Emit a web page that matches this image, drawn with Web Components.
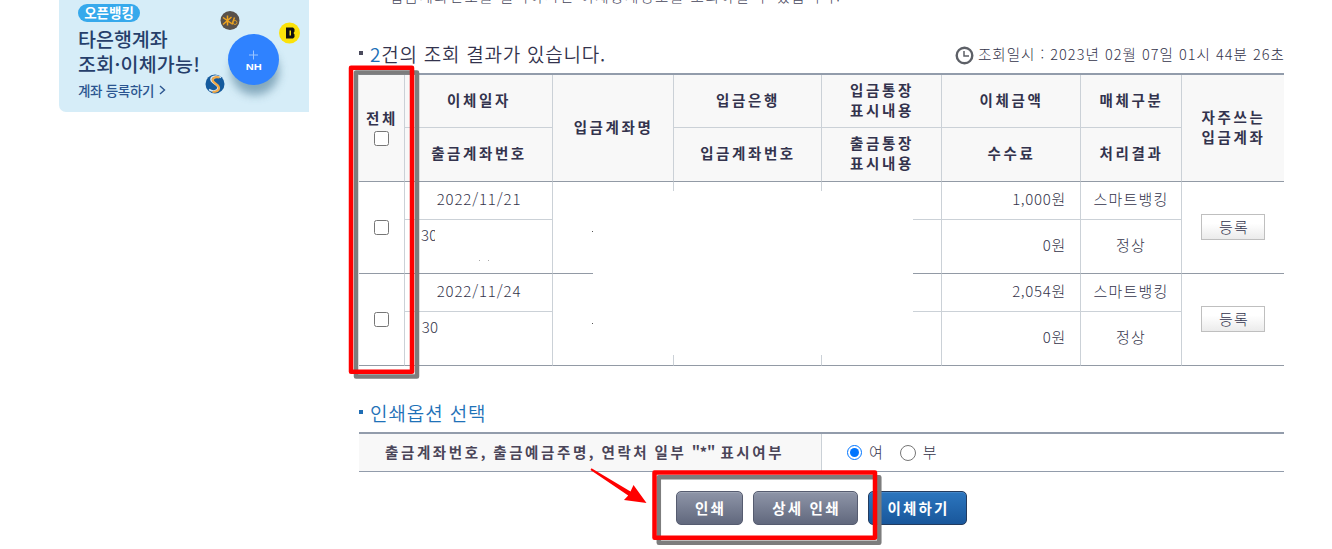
<!DOCTYPE html>
<html lang="ko">
<head>
<meta charset="utf-8">
<title>이체결과조회</title>
<style>
html,body{margin:0;height:549px;overflow:hidden;background:#fff}
body{font-family:"Noto Sans CJK KR","Noto Sans",sans-serif;color:#44445a}
</style>
</head>
<body>
<bank-page></bank-page>
<script>
const define = (name, html, setup) => customElements.define(name, class extends HTMLElement {
  constructor() {
    super();
    this.attachShadow({ mode: 'open' }).innerHTML = html;
  }
  connectedCallback() { if (setup) setup(this, this.shadowRoot); }
});

define('open-banking-banner', `
<style>
:host{display:block;position:relative;box-sizing:border-box;width:250px;height:112px;background:#d6edf8;border-radius:0 0 0 7px;padding:4px 0 0 19px;color:#263f6b;white-space:nowrap}
.pill{display:block;width:62px;height:18px;border-radius:9px;background:#36a9ec;color:#fff;font-weight:700;font-size:13.5px;line-height:17px;text-align:center;letter-spacing:0}
.big{font-weight:500;font-size:19.5px;line-height:25px;letter-spacing:0;margin-top:4px}
.big+.big{margin-top:0;letter-spacing:.25px}
.link{font-weight:500;font-size:13.5px;line-height:20px;margin-top:4px;color:#2b5590;display:flex;align-items:center;gap:5px;letter-spacing:-.3px}
svg.art{position:absolute;left:141px;top:0}
</style>
<span class="pill">오픈뱅킹</span>
<div class="big">타은행계좌</div>
<div class="big">조회·이체가능!</div>
<div class="link">계좌 등록하기<svg width="7" height="10" viewBox="0 0 7 10" fill="none" stroke="#2b5590" stroke-width="1.4"><path d="M1 1l4.5 4L1 9"/></svg></div>
<svg class="art" width="109" height="112" viewBox="200 0 109 112">
<defs><filter id="b" x="-50%" y="-50%" width="200%" height="200%"><feGaussianBlur stdDeviation="5"/></filter></defs>
<circle cx="255" cy="71" r="24" fill="#3f6f8a" opacity=".55" filter="url(#b)"/>
<circle cx="253.500" cy="59.500" r="25.500" fill="#2f82ff"/>
<path d="M253.500 50.500v9M249 55h9" stroke="#9cc5ff" stroke-width="1"/>
<text x="253.800" y="69.500" font-family="Liberation Sans" font-weight="700" font-size="9" textLength="16" lengthAdjust="spacingAndGlyphs" fill="#fff" text-anchor="middle">NH</text>
<circle cx="230" cy="20.500" r="9.500" fill="#59514a"/>
<path d="M227.500 15.500v10M223 17.500l8.500 6M231.500 17l-8.500 7.500M234.500 17.500l-2.500 7" stroke="#f0a51e" stroke-width="1.500" fill="none"/><circle cx="235" cy="22.500" r="2" fill="none" stroke="#d79a28"/>
<circle cx="289.500" cy="33" r="10.500" fill="#fbe20a"/>
<path fill-rule="evenodd" d="M286 27.500h7l1.500 1.500v2.500l-1 1.500 1 1.500v2.500l-1.500 1.500h-7zM289.500 30.500v5h1.500v-5z" fill="#111"/>
<circle cx="215" cy="84" r="9.500" fill="#145a9d"/>
<path d="M221 77.500c-5-3-12-1-9.500 3.500 1.500 3 7 3 6.500 7-.5 3-5 4-9 1.500" fill="none" stroke="#d9e7ef" stroke-width="1.600"/>
<path d="M219.500 77.500c-5-1-7.500 1-6.500 3.500 1.500 3 6.500 3.500 6 7.500-.5 2.500-3 3.500-6.500 3.500" fill="none" stroke="#f0a847" stroke-width="2.200"/>
</svg>`);

define('section-title', `
<style>
:host{display:flex;align-items:center;height:26px;font-size:19px;font-weight:350;line-height:26px;letter-spacing:.75px;color:#33334d;white-space:nowrap}
i{width:4px;height:4px;background:var(--dot,#4a4a5c);margin:-4px 7px 0 0}
span{margin-top:-2px}
</style><i></i><span><slot></slot></span>`);

define('data-cell', `
<style>
:host{display:flex;box-sizing:border-box;align-items:center;justify-content:center;text-align:center;flex-direction:column;border-right:1px solid #cbd1d7;border-bottom:1px solid #cbd1d7;padding-bottom:3px;font-size:15px;line-height:20px;letter-spacing:1.2px;font-weight:300;white-space:nowrap;min-width:0;color:#33334a}
:host([head]){background:#f8f8f8;font-size:14.5px;font-weight:700;letter-spacing:2.6px;padding-left:1px;color:#33334d}
:host([tall]){grid-row:span 2}
:host([tall]),:host([end]){border-bottom-color:#929aa5}
:host([last]){border-right:0}
:host([num]){align-items:flex-end;padding-right:14px;letter-spacing:.7px}
:host([date]){letter-spacing:.85px;padding-left:1px}
:host([account]){align-items:flex-start;justify-content:flex-start;padding:5px 0 0 16px;letter-spacing:.3px}
:host([control]){padding-bottom:0}
</style><slot></slot>`);

define('check-box', `
<style>:host{display:block;width:15px;height:15px;margin-left:-1px}input{display:block;width:15px;height:15px;margin:0}</style><input type="checkbox">`);

define('small-button', `
<style>:host{display:block;margin-top:-2px}button{display:block;box-sizing:border-box;width:64px;height:26px;border:1px solid #bfbfbf;padding:0 0 0 2px;background:linear-gradient(#fff 35%,#ebebeb);font:300 15px/22px "Noto Sans CJK KR",sans-serif;letter-spacing:1.2px;color:#33334d}</style>
<button><slot></slot></button>`);

define('result-table', `
<style>
:host{display:grid;grid-template-columns:46px 148px 121px 148px 120px 139px 101px 102px;grid-template-rows:53px 54px 38px 54px 38px 54px;border-top:2px solid #929cab;position:relative}
.mask{position:absolute;left:234px;top:116px;width:320px;height:164px;background:#fff}
.speck{position:absolute;width:1px;height:1px;background:#555}
.faint{background:#aaa}
.cut{display:block;width:14px;overflow:hidden}
.cut.wide{width:18px}
</style>
<data-cell head tall><span>전체</span><check-box style="margin-top:3px;margin-left:-2px"></check-box></data-cell>
<data-cell head>이체일자</data-cell><data-cell head tall>입금계좌명</data-cell><data-cell head>입금은행</data-cell>
<data-cell head><span>입금통장</span><span>표시내용</span></data-cell><data-cell head>이체금액</data-cell><data-cell head>매체구분</data-cell>
<data-cell head tall last><span>자주쓰는</span><span>입금계좌</span></data-cell>
<data-cell head end>출금계좌번호</data-cell><data-cell head end>입금계좌번호</data-cell>
<data-cell head end><span>출금통장</span><span>표시내용</span></data-cell><data-cell head end>수수료</data-cell><data-cell head end>처리결과</data-cell>
<template id="row">
<data-cell tall control><check-box></check-box></data-cell>
<data-cell date class="d"></data-cell><data-cell tall></data-cell><data-cell></data-cell><data-cell></data-cell>
<data-cell num class="a"></data-cell><data-cell>스마트뱅킹</data-cell><data-cell tall last control><small-button>등록</small-button></data-cell>
<data-cell end account><span class="cut">30</span></data-cell><data-cell end></data-cell><data-cell end></data-cell><data-cell end num>0원</data-cell><data-cell end>정상</data-cell>
</template>`, (el, root) => {
  const t = root.getElementById('row');
  [['2022/11/21', '1,000원'], ['2022/11/24', '2,054원']].forEach(([d, a], i) => {
    const f = document.importNode(t.content, true);
    f.querySelector('.d').textContent = d;
    f.querySelector('.a').textContent = a;
    if (i) f.querySelector('.cut').classList.add('wide');
    root.append(f);
  });
  const add = (cls, style) => { const s = document.createElement('span'); s.className = cls; s.style.cssText = style; root.append(s); };
  add('mask', '');
  add('speck', 'left:233px;top:156px');
  add('speck', 'left:233px;top:248px');
  add('speck faint', 'left:120px;top:185px');
  add('speck faint', 'left:129px;top:185px');
});

define('print-option', `
<style>
:host{display:flex;height:37px;border-top:2px solid #929cab;border-bottom:1px solid #929cab;white-space:nowrap}
.l{box-sizing:border-box;width:463px;background:#f8f8f8;border-right:1px solid #cbd1d7;padding-left:26px;font-weight:700;font-size:14.5px;line-height:35px;letter-spacing:2.6px;word-spacing:-1.4px;color:#4a4558}
.l span{letter-spacing:-.2px}
.r{display:flex;align-items:center;padding-left:25px;font-size:15px;font-weight:300;color:#33334a}
.r span{margin-top:-2px}
input{margin:0 7px 0 0;width:15px;height:15px;accent-color:#0075ff}
input.n{width:16px;height:16px;margin-left:17px}
</style>
<div class="l">출금계좌번호, 출금예금주명, 연락처 일부 <span>"*"</span> 표시여부</div>
<div class="r"><input type="radio" name="m" checked><span>여</span><input class="n" type="radio" name="m"><span>부</span></div>`);

define('action-button', `
<style>
:host{display:block}
button{box-sizing:border-box;display:block;width:100%;height:34px;border:1px solid #565c70;border-radius:5px;padding:0 0 1px 2px;background:linear-gradient(#8e95a8,#61687d);box-shadow:inset 0 1px #9da4b4;color:#fff;font:700 14.5px/29px "Noto Sans CJK KR",sans-serif;letter-spacing:2.2px;white-space:nowrap}
:host([primary]) button{border-color:#233b5e;background:linear-gradient(#2c76bf,#19579b);box-shadow:inset 0 1px #4386c8}
</style><button><slot></slot></button>`);

define('markup-layer', `
<style>:host{position:absolute;inset:0;pointer-events:none}svg{display:block}</style>
<svg width="1332" height="549" fill="none" stroke-linejoin="round">
<g stroke="#7d7d7d" stroke-width="4.500"><rect x="356" y="72.500" width="61" height="304"/><rect x="658.800" y="477.300" width="220.500" height="65.500"/></g>
<g stroke="#f00" stroke-width="4.500"><rect x="351" y="67.700" width="61" height="304"/><rect x="654.500" y="472.500" width="220.500" height="65.300"/></g>
<path d="M591.500 468.300L630.500 491.500L633.500 485L646.500 503L624 500L628.200 495.500L590.500 470Z" fill="#f00"/>
</svg>`);

define('bank-page', `
<style>
:host{display:block;position:relative;width:1332px;height:549px;overflow:hidden}
.cols{display:flex;align-items:flex-start;padding-left:59px;gap:50px}
main{width:925px}
.note{margin:-14px 0 0 17px;height:20px;font-size:14.5px;font-weight:300;line-height:20px;letter-spacing:1.6px;white-space:nowrap}
.top{display:flex;justify-content:space-between;align-items:center;height:26px;margin-top:36px;padding-bottom:5px}
.top b{color:#2070b8;font-weight:inherit}
.time{display:flex;align-items:center;gap:4px;font-size:14.5px;font-weight:300;line-height:20px;letter-spacing:1.03px;color:#33334a;white-space:nowrap;margin-right:-1px}
.time span{margin-top:-2px}
.opt{margin-top:35px;--dot:#1f6db4}
.opt span{color:#1f72b8;letter-spacing:.9px}
print-option{margin-top:5px}
.buttons{display:flex;gap:10px;margin:19px 0 0 317px}
</style>
<div class="cols">
<open-banking-banner></open-banking-banner>
<main>
<div class="note">* 입금계좌번호를 클릭하시면 이체상세정보를 조회하실 수 있습니다.</div>
<div class="top"><section-title><b>2</b>건의 조회 결과가 있습니다.</section-title>
<div class="time"><svg width="19" height="19" viewBox="0 0 19 19" fill="none" stroke="#5d6067"><circle cx="9.500" cy="9.500" r="7.800" stroke-width="2.400"/><path d="M9 5v5h5" stroke-width="1.500"/></svg><span>조회일시 : 2023년 02월 07일 01시 44분 26초</span></div></div>
<result-table></result-table>
<section-title class="opt"><span>인쇄옵션 선택</span></section-title>
<print-option></print-option>
<div class="buttons"><action-button style="width:67px">인쇄</action-button><action-button style="width:105px">상세 인쇄</action-button><action-button primary style="width:99px">이체하기</action-button></div>
</main>
</div>
<markup-layer></markup-layer>`);
</script>
</body>
</html>
